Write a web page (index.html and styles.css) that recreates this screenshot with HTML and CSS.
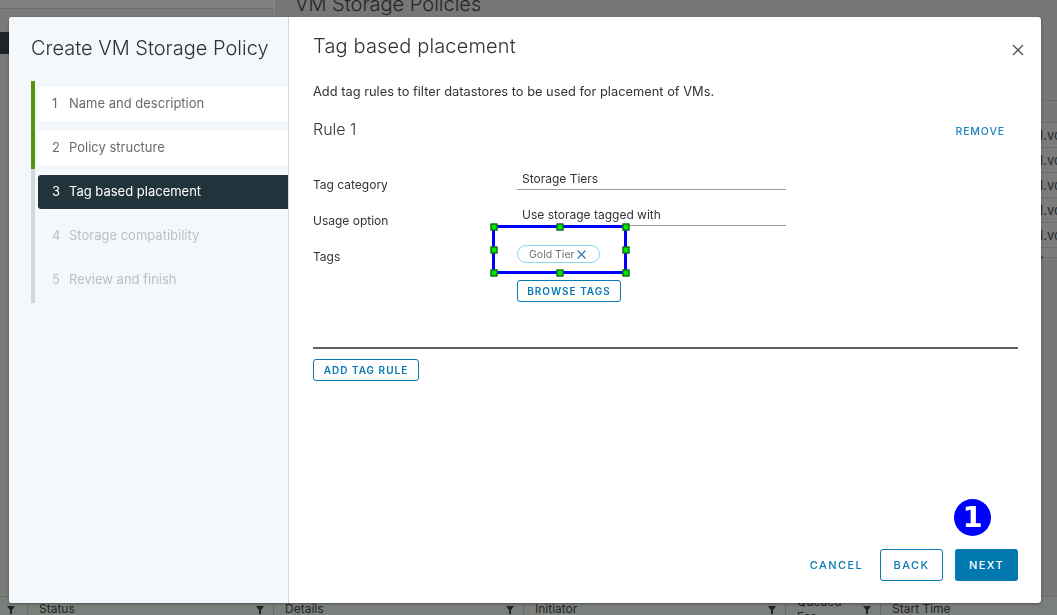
FILE: index.html
```html
<!DOCTYPE html>
<html lang="en">
<head>
<meta charset="utf-8">
<title>Create VM Storage Policy</title>
<link rel="stylesheet" href="styles.css">
</head>
<body>
<div class="bg-page">
  <aside class="bg-nav">
    <div class="bg-nav-top"></div>
    <div class="bg-nav-active"></div>
  </aside>
  <main class="bg-main">
    <h1 class="bg-title">VM Storage Policies</h1>
    <div class="bg-toolbar"></div>
    <div class="bg-table">
      <div class="bg-row bg-head"></div>
      <div class="bg-row"><span>l.vcenter</span></div>
      <div class="bg-row"><span>l.vcenter</span></div>
      <div class="bg-row"><span>l.vcenter</span></div>
      <div class="bg-row"><span>l.vcenter</span></div>
      <div class="bg-row"><span>l.vcenter</span></div>
      <div class="bg-row bg-short"><span>.</span></div>
    </div>
  </main>
  <div class="bg-tasks">
    <div class="th th-first"><svg class="funnel" viewBox="0 0 8 8"><path d="M0 0H8L5 4V8H3V4Z"/></svg></div>
    <div class="th"><span>Status</span><svg class="funnel" viewBox="0 0 8 8"><path d="M0 0H8L5 4V8H3V4Z"/></svg></div>
    <div class="th"><span>Details</span><svg class="funnel" viewBox="0 0 8 8"><path d="M0 0H8L5 4V8H3V4Z"/></svg></div>
    <div class="th"><span>Initiator</span><svg class="funnel" viewBox="0 0 8 8"><path d="M0 0H8L5 4V8H3V4Z"/></svg></div>
    <div class="th th-two"><span>Queued<br>For</span><svg class="funnel" viewBox="0 0 8 8"><path d="M0 0H8L5 4V8H3V4Z"/></svg></div>
    <div class="th"><span>Start Time</span></div>
  </div>
</div>

<div class="modal">
  <aside class="wiz-nav">
    <h2 class="wiz-title">Create VM Storage Policy</h2>
    <ol class="steps">
      <li class="step done"><div class="step-box"><span class="num">1</span>Name and description</div></li>
      <li class="step done"><div class="step-box"><span class="num">2</span>Policy structure</div></li>
      <li class="step current"><div class="step-box"><span class="num">3</span>Tag based placement</div></li>
      <li class="step todo"><div class="step-box"><span class="num">4</span>Storage compatibility</div></li>
      <li class="step todo last"><div class="step-box"><span class="num">5</span>Review and finish</div></li>
    </ol>
  </aside>
  <section class="wiz-content">
    <header class="wiz-header">
      <h3 class="page-title">Tag based placement</h3>
      <button class="close" aria-label="Close">
        <svg viewBox="0 0 12 12" width="12" height="12"><path d="M1 1L11 11M11 1L1 11" stroke="#4b565c" stroke-width="1.4" fill="none"/></svg>
      </button>
    </header>
    <p class="desc">Add tag rules to filter datastores to be used for placement of VMs.</p>
    <div class="rule-head">
      <h4 class="rule-title">Rule 1</h4>
      <button class="link-btn">REMOVE</button>
    </div>
    <div class="form">
      <div class="label">Tag category</div>
      <div class="input">Storage Tiers</div>
      <div class="label">Usage option</div>
      <div class="input">Use storage tagged with</div>
      <div class="label">Tags</div>
      <div class="tags">
        <div class="pill-row">
          <span class="pill">Gold Tier<svg viewBox="0 0 8 8" width="9" height="9"><path d="M0.5 0.5L7.5 7.5M7.5 0.5L0.5 7.5" stroke="#2f7fae" stroke-width="1.1" fill="none"/></svg></span>
          <div class="sel">
            <i class="h tl"></i><i class="h tm"></i><i class="h tr"></i>
            <i class="h ml"></i><i class="h mr"></i>
            <i class="h bl"></i><i class="h bm"></i><i class="h br"></i>
          </div>
        </div>
        <button class="btn-sm browse">BROWSE TAGS</button>
      </div>
    </div>
    <hr class="divider">
    <button class="btn-sm add-rule">ADD TAG RULE</button>
    <footer class="wiz-footer">
      <button class="btn btn-flat">CANCEL</button>
      <button class="btn btn-outline">BACK</button>
      <div class="next-wrap">
        <span class="badge">1</span>
        <button class="btn btn-primary">NEXT</button>
      </div>
    </footer>
  </section>
</div>
</body>
</html>
```

FILE: styles.css
```css
* { box-sizing: border-box; }
html, body { margin: 0; padding: 0; }
body {
  width: 1057px;
  height: 615px;
  overflow: hidden;
  background: #787878;
  font-family: Inter, "Noto Sans", sans-serif;
  color: #333;
}
button { font-family: inherit; cursor: pointer; }

/* ---------- dimmed page underneath ---------- */
.bg-page {
  display: grid;
  grid-template-columns: 275px 1fr;
  grid-template-rows: 596px 19px;
  height: 615px;
}
.bg-nav { background: #7a7a7a; border-right: 1px solid #878787; }
.bg-nav-top { height: 9px; background: #808080; border-bottom: 1px solid #6c6c6c; }
.bg-nav-active { margin-top: 23px; height: 22px; background: #1c2626; }
.bg-main { background: #777; overflow: hidden; padding-left: 20px; }
.bg-title {
  margin: -8px 0 0;
  font-weight: 300;
  font-size: 20px;
  line-height: 24px;
  color: #252525;
}
.bg-toolbar { height: 85px; border-bottom: 1px solid #6a6a6a; }
.bg-row {
  height: 25px;
  border-bottom: 1px solid #6d6f6d;
  background: #7b7d7b;
  display: flex;
  justify-content: flex-end;
  align-items: center;
  font-size: 13px;
  color: #2a2a2a;
}
.bg-head { height: 22px; background: #777; }
.bg-short { height: 10px; }
.bg-row span { width: 17px; overflow: hidden; white-space: nowrap; }
.bg-tasks {
  grid-column: 1 / -1;
  display: grid;
  grid-template-columns: 27px 246px 250px 262px 95px 1fr;
  background: #7a7f7b;
  border-top: 1px solid #6a6d6a;
}
.th {
  display: flex;
  justify-content: space-between;
  align-items: flex-start;
  padding: 4px 9px 0 11px;
  border-left: 1px solid #686b68;
  font-size: 12px;
  line-height: 16px;
  color: #242424;
}
.th-first { border-left: 0; padding-left: 7px; }
.th-two span { margin-top: -7px; line-height: 15px; }
.funnel { width: 8px; height: 8px; margin-top: 5px; fill: #222; }

/* ---------- modal ---------- */
.modal {
  position: fixed;
  left: 9px;
  top: 17px;
  width: 1032px;
  height: 586px;
  display: flex;
  background: #fff;
  border-radius: 3px;
  overflow: hidden;
  box-shadow: 0 1px 3px rgba(0, 0, 0, 0.35);
}
.wiz-nav {
  width: 280px;
  flex: none;
  background: #f4f8fc;
  border-right: 1px solid #c9d8e1;
  padding: 19px 0 0 22px;
}
.wiz-title {
  margin: 0;
  font-weight: 300;
  font-size: 20px;
  line-height: 24px;
  color: #303030;
}
.steps { list-style: none; margin: 21px 0 0; padding: 0; }
.step {
  height: 44px;
  border-left: 4px solid #cfdbdb;
  padding: 6px 0 4px 3px;
}
.step.last { height: 46px; }
.step.done { border-left-color: #54940f; }
.step-box {
  height: 34px;
  display: flex;
  align-items: center;
  padding: 0 0 3px 14px;
  border-radius: 3px 0 0 3px;
  font-size: 13px;
  color: #6a6a6a;
}
.done .step-box { background: #fff; }
.current .step-box { background: #21333b; color: #fff; padding-bottom: 2px; }
.todo .step-box { color: #b7c2c5; }
.num { width: 17px; flex: none; }

.wiz-content {
  flex: 1;
  display: flex;
  flex-direction: column;
  align-items: stretch;
  padding: 0 23px 22px 24px;
}
.wiz-header {
  display: flex;
  justify-content: space-between;
  align-items: flex-start;
  padding-top: 17px;
}
.page-title {
  margin: 0;
  font-weight: 300;
  font-size: 20px;
  letter-spacing: 0.15px;
  line-height: 24px;
  color: #333;
}
.close {
  margin: 10px -6px 0 0;
  padding: 0;
  width: 12px;
  height: 12px;
  border: 0;
  background: none;
  display: block;
}
.close svg { display: block; }
.desc {
  margin: 25px 0 0;
  font-size: 12.85px;
  line-height: 18px;
  color: #333;
}
.rule-head {
  margin-top: 17px;
  height: 22px;
  display: flex;
  justify-content: space-between;
  align-items: center;
}
.rule-title {
  margin: 0;
  font-weight: 300;
  font-size: 16px;
  line-height: 22px;
  color: #333;
}
.link-btn {
  border: 0;
  background: none;
  padding: 0;
  margin: 4px 13px 0 0;
  font-size: 10.5px;
  font-weight: 500;
  letter-spacing: 0.9px;
  color: #1a84bb;
}
.form {
  margin-top: 27px;
  display: grid;
  grid-template-columns: 204px 269px;
  grid-template-rows: 36px 36px auto;
}
.label {
  font-size: 12px;
  line-height: 36px;
  color: #333;
}
.input {
  height: 23px;
  padding: 3px 5px 0;
  border-bottom: 1px solid #9b9b9b;
  font-size: 12px;
  line-height: 18px;
  color: #333;
}
.tags { display: flex; flex-direction: column; align-items: flex-start; padding-top: 6px; }
.pill-row { position: relative; display: flex; }
.pill {
  display: inline-flex;
  align-items: center;
  gap: 3px;
  height: 18px;
  width: 83px;
  padding-left: 11px;
  border: 1px solid #8fd3f0;
  border-radius: 9px;
  font-size: 10.5px;
  color: #727272;
}
.sel {
  position: absolute;
  left: -25px;
  top: -20px;
  width: 135px;
  height: 49px;
  border: 3px solid #0000ff;
}
.h {
  position: absolute;
  width: 7px;
  height: 7px;
  background: #00e600;
  border: 1px solid #1a3a1a;
  transform: translate(-50%, -50%);
}
.tl, .ml, .bl { left: -1.5px; }
.tm, .bm { left: 50%; }
.tr, .mr, .br { left: calc(100% + 1.5px); }
.tl, .tm, .tr { top: -1.5px; }
.ml, .mr { top: 50%; }
.bl, .bm, .br { top: calc(100% + 1.5px); }

.btn-sm {
  height: 22px;
  border: 1px solid #0a79b3;
  border-radius: 3px;
  background: #fff;
  font-size: 10px;
  font-weight: 600;
  letter-spacing: 1px;
  color: #0a79b3;
  padding: 0;
}
.browse { width: 104px; margin-top: 17px; }
.divider {
  margin: 45px 0 0;
  border: 0;
  height: 2px;
  background: #606060;
}
.add-rule { width: 106px; margin-top: 10px; align-self: flex-start; }

.wiz-footer {
  margin-top: auto;
  display: flex;
  justify-content: flex-end;
  gap: 12px;
}
.btn {
  height: 32px;
  width: 63px;
  padding: 0;
  border-radius: 3px;
  font-size: 11px;
  font-weight: 500;
  letter-spacing: 1.4px;
}
.btn-flat { border: 0; background: none; color: #0a79b3; }
.btn-outline { border: 1px solid #0a79b3; background: #fff; color: #0a79b3; }
.btn-primary { border: 0; background: #0079b0; color: #fff; }
.next-wrap { position: relative; }
.next-wrap .btn { display: block; }
.badge {
  position: absolute;
  left: -1px;
  top: -50px;
  width: 37px;
  height: 37px;
  border-radius: 50%;
  background: #0000ff;
  color: #fff;
  font-family: "DejaVu Sans", sans-serif;
  font-weight: bold;
  font-size: 29px;
  line-height: 37px;
  text-align: center;
}
```
